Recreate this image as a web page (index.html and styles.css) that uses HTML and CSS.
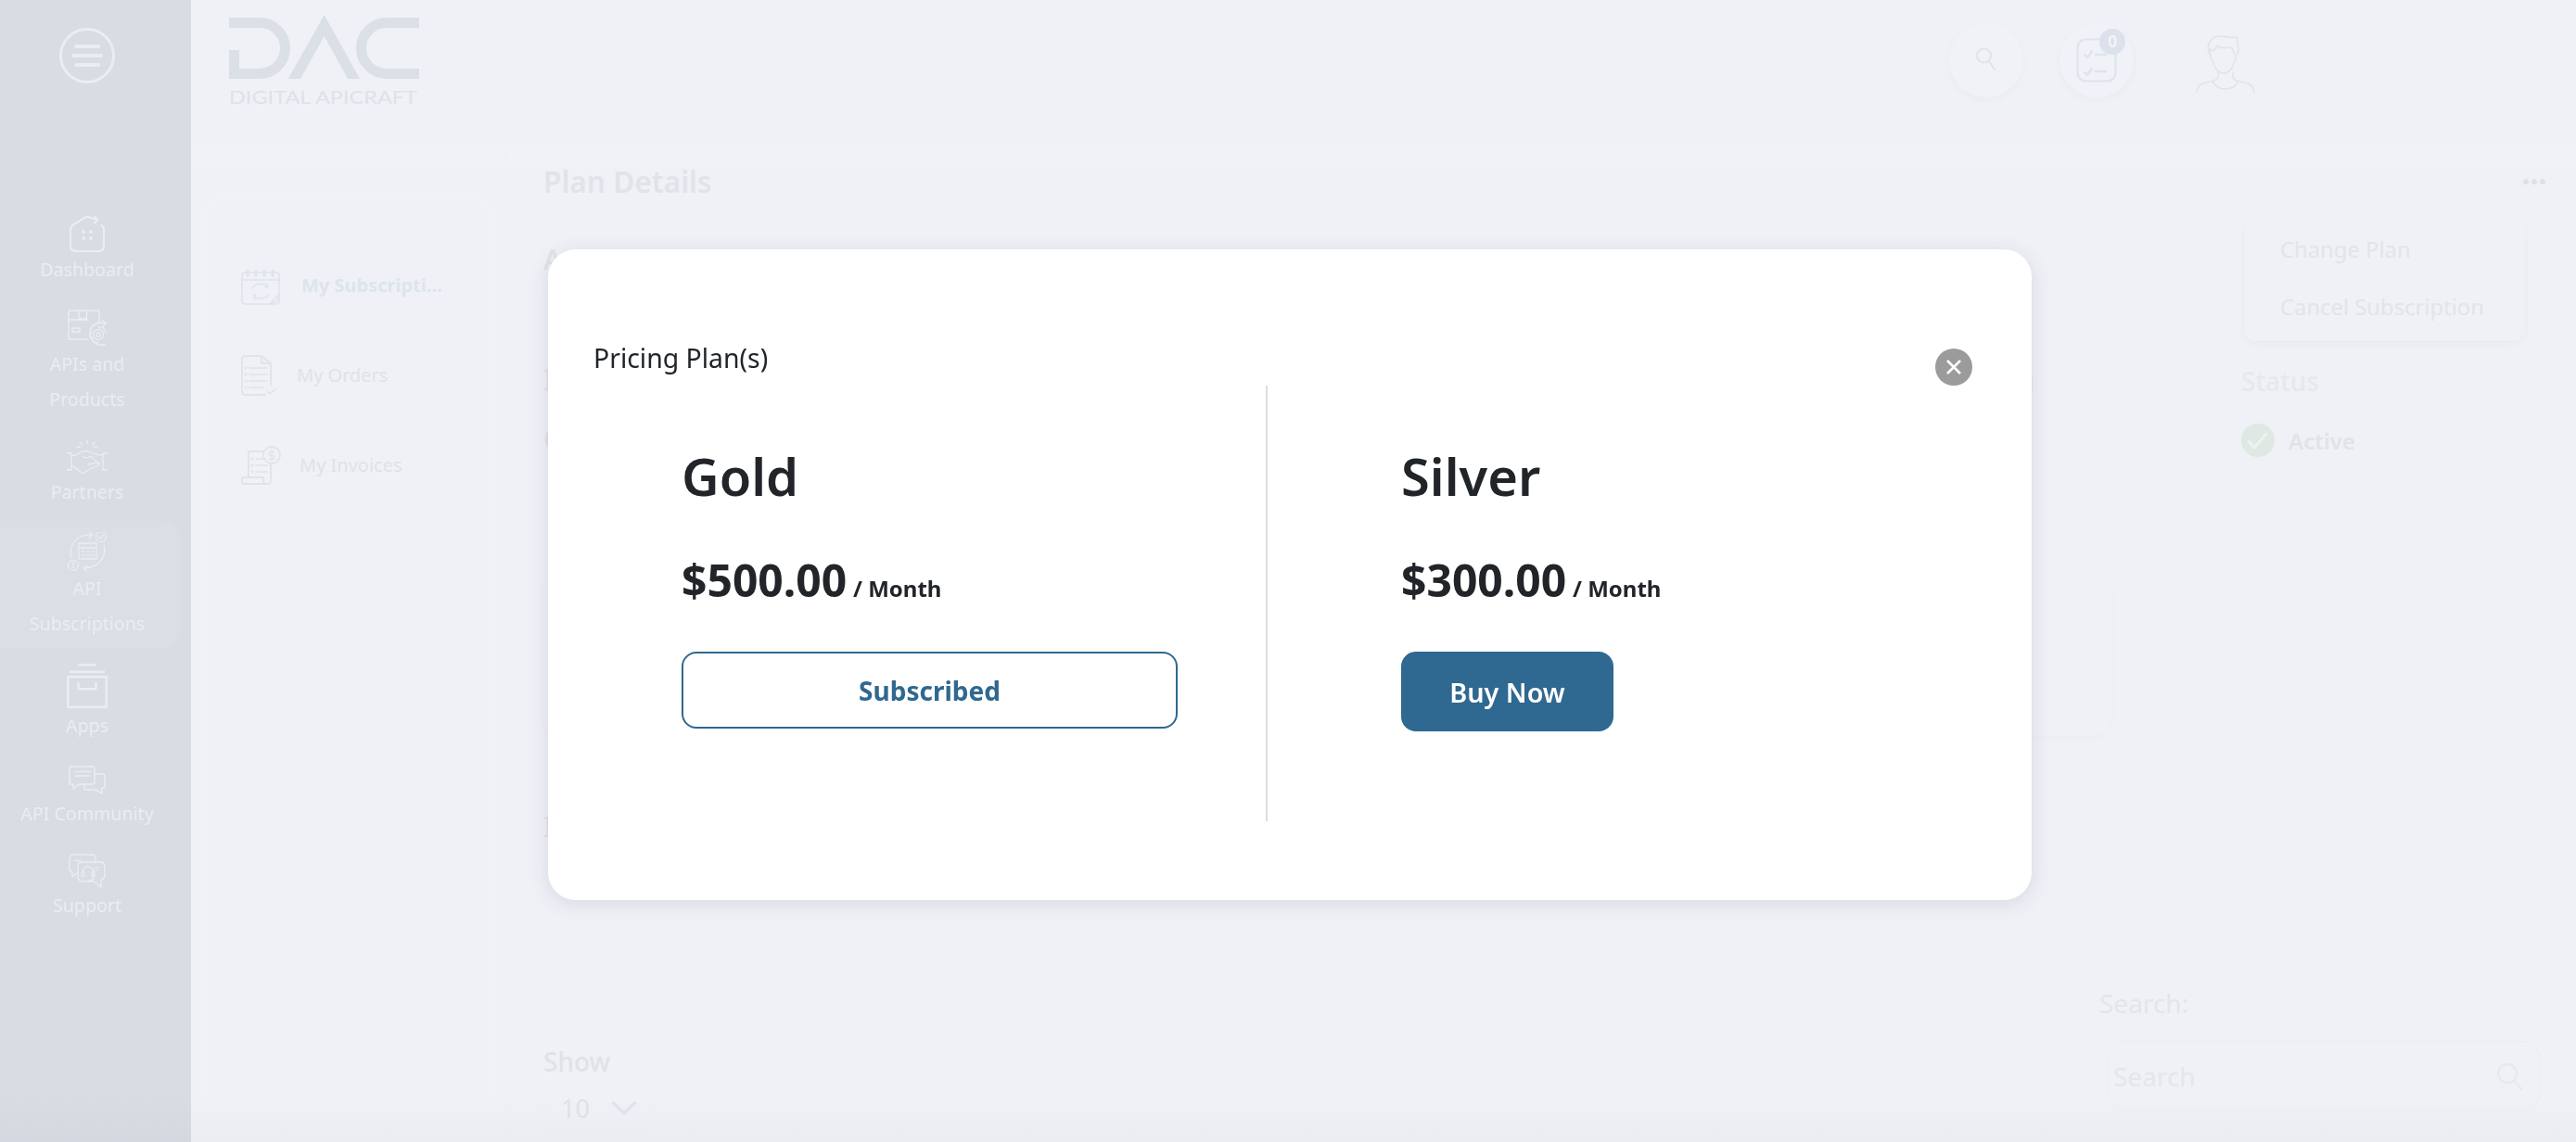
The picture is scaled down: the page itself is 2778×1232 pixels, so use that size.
FILE: index.html
```html
<!DOCTYPE html>
<html lang="en">
<head>
<meta charset="utf-8">
<title>Plan Details</title>
<link rel="stylesheet" href="styles.css">
</head>
<body>
<div class="app">
  <aside class="sidebar">
    <button class="menu-btn" aria-label="Menu">
      <svg width="60" height="60" viewBox="0 0 60 60"><circle cx="30" cy="30" r="28.500" class="ico" stroke-width="3"/><path d="M18 20h24M15 30h30M18 40h24" class="ico" stroke-width="4"/></svg>
    </button>
    <nav class="nav">
      <a class="nav-item">
        <svg width="38" height="39" viewBox="0 0 38 39"><path d="M30 4 22 1.600q-3-1.200-6 .4L3.500 10Q1 12 1 15v17q0 6 6 6h24q6 0 6-6V15q0-3-2.500-5" class="ico" stroke-width="2.200"/><path d="M27 .5 30.500 4 27 7.500" class="ico" stroke-width="2"/><circle cx="15" cy="17" r="1.900" class="dot"/><circle cx="23" cy="17" r="1.900" class="dot"/><circle cx="15" cy="24" r="1.900" class="dot"/><circle cx="23" cy="24" r="1.900" class="dot"/></svg>
        <span>Dashboard</span>
      </a>
      <a class="nav-item">
        <svg width="42" height="40" viewBox="0 0 42 40"><path d="M1 1h33v13M1 1v31h21M1 11h21M12 1v10l2.500-2 2 2 2-2 2 2V1M5 24h8v-4H5z" class="ico" stroke-width="1.400"/><circle cx="33" cy="27" r="5.500" class="ico" stroke-width="1.400"/><circle cx="33" cy="27" r="2" class="ico" stroke-width="1.400"/><path d="M41 15c-7-3-15 1-17 8-1 8 5 17 17 15" class="ico" stroke-width="1.400"/><path d="m38 12 3 3-3 3" class="ico" stroke-width="1.400"/><path d="m33 18 2 2 3-1 2 4 2 2M33 36l-3-1-3-1-1-4-2-3 2-3" class="ico" stroke-width="1.200"/></svg>
        <span>APIs and<br>Products</span>
      </a>
      <a class="nav-item">
        <svg width="44" height="38" viewBox="0 0 44 38"><path d="M22 0v5M14 3l3 3M30 3l-3 3M11 8h4M29 8h4" class="ico" stroke-width="1.300"/><path d="M0 15h5v18H0M44 15h-5v18h5" class="ico" stroke-width="1.300"/><path d="M5 17c4 1 5 0 8-2 4-3 9-3 13-1 4 2 7 3 13 3M5 29c3 0 4 1 6 3l5 4c2 1 4 0 5-2l13-6c2-1 1-4-2-3l-9 2M17 18c3 3 6 2 9 0l9 9" class="ico" stroke-width="1.300"/></svg>
        <span>Partners</span>
      </a>
      <a class="nav-item nav-item-active">
        <svg width="42" height="42" viewBox="0 0 42 42"><path d="M4 28C0 14 10 2 26 3M39 14c3 13-5 24-21 25" class="ico" stroke-width="1.300"/><path d="m23 0 4 3-4 3M21 36l-4 3 4 3" class="ico" stroke-width="1.300"/><circle cx="36" cy="5" r="5.500" class="ico" stroke-width="1.300"/><path d="m33.500 5 2 2 3-4" class="ico" stroke-width="1.200"/><circle cx="6" cy="36" r="5.500" class="ico" stroke-width="1.300"/><path d="M12 12h19v17H12zM12 17h19M16 21h2m3 0h2m3 0h2M16 25h2m3 0h2m3 0h2" class="ico" stroke-width="1.300"/><path d="M7.500 33.500H5.200v2.500h1.800v2.300H4.500M6 32.500v7" class="ico" stroke-width=".8"/></svg>
        <span>API<br>Subscriptions</span>
      </a>
      <a class="nav-item">
        <svg width="44" height="48" viewBox="0 0 44 48"><path d="M13 1.200h18M4 8.800h36M1.200 14.200h41.600v32.600H1.200zM12.500 21v6.200h19V21" class="ico" stroke-width="2.400"/></svg>
        <span>Apps</span>
      </a>
      <a class="nav-item">
        <svg width="40" height="33" viewBox="0 0 40 33"><path d="M3 1h23q2 0 2 2v15q0 2-2 2H11l-6 5v-5H3q-2 0-2-2V3q0-2 2-2z" class="ico" stroke-width="1.500"/><path d="M7 6.500h16M7 11h16" class="ico" stroke-width="1.500"/><path d="M28 9h9q2 0 2 2v11q0 2-2 2h-1v6l-7-4H19q-2 0-2-2v-4" class="ico" stroke-width="1.500"/></svg>
        <span>API Community</span>
      </a>
      <a class="nav-item">
        <svg width="40" height="37" viewBox="0 0 40 37"><path d="M29 9V5q0-4-4-4H6Q1 1 1 6v10q0 3 3 4v5l6-5" class="ico" stroke-width="1.400"/><path d="M15 9h19q5 0 5 5v9q0 4-4 5v8l-8-6H16q-6 0-6-6V14q0-5 5-5z" class="ico" stroke-width="1.400"/><path d="M7 7.500h6" class="ico" stroke-width="1.400" stroke-dasharray="1.500 1"/><path d="M15 20c0-8 11-8 12 0v6q0 3-6 3" class="ico" stroke-width="1.400"/><rect x="14" y="19" width="3" height="6" rx="1.500" class="ico" stroke-width="1.200"/><rect x="25" y="19" width="3" height="6" rx="1.500" class="ico" stroke-width="1.200"/><path d="M28 15h6M28 18h4" class="ico" stroke-width="1.200"/></svg>
        <span>Support</span>
      </a>
    </nav>
  </aside>

  <div class="main">
    <header class="topbar">
      <svg class="logo" width="206" height="100" viewBox="0 0 206 100" role="img" aria-label="DAC Digital APICraft">
        <path d="M6.500 38V63.500H34A27.500 27.500 0 0 0 34 8.500H1" class="logo-mark" stroke-width="11"/>
        <path d="M103.700 0 142 69h-13L103.700 23 78 69H64.700z" class="logo-fill"/>
        <path d="M206 8.500H171A27.500 27.500 0 0 0 171 63.500H206" class="logo-mark" stroke-width="11"/>
        <text x="1" y="95.500" textLength="203" lengthAdjust="spacingAndGlyphs" class="logo-text">DIGITAL APICRAFT</text>
      </svg>
      <div class="top-actions">
        <div class="circle-btn">
          <svg width="24" height="30" viewBox="0 0 24 30"><circle cx="9.500" cy="10" r="7.500" class="line" stroke-width="2"/><path d="m15 16 6 9" class="line" stroke-width="2"/></svg>
        </div>
        <div class="circle-btn circle-btn-last">
          <svg width="44" height="48" viewBox="0 0 44 48"><rect x="1.500" y="1.500" width="41" height="45" rx="9" class="line-blue" stroke-width="2.200"/><path d="m9 18 3 3 5-7M9 37l3 3 5-7M21 18h11M21 36h11" class="line-blue" stroke-width="2.400"/></svg>
          <span class="badge">0</span>
        </div>
        <div class="avatar">
          <svg width="64" height="62" viewBox="0 0 64 62"><path d="M15 21c-2-5-2-9-1-12 2-5 7-8 13-8 5 0 9 2 14 1l4 1v6c1 3 1 8 0 12" class="line" stroke-width="1.600"/><path d="M15 14c2 2 4 4 6 1l2-4c2 3 7 3 12 2l4 1 4 9c1 3 0 5-2 6-1 7-6 12-11 12s-10-5-11-12c-2-1-3-3-3-6z" class="line" stroke-width="1.600"/><path d="M24 40v5c0 2-2 3-4 4L8 52c-5 2-7 5-7 10M40 40v5c0 2 2 3 4 4l12 3c5 2 7 5 7 10M18 50c3 5 8 8 14 8s11-3 14-8" class="line" stroke-width="1.600"/></svg>
        </div>
      </div>
    </header>

    <div class="workspace">
      <aside class="subnav">
        <div class="subnav-card">
          <a class="sub-item sub-item-active">
            <svg width="42" height="38" viewBox="0 0 42 38"><rect x="1" y="3" width="40" height="34" rx="3" class="line-blue" stroke-width="1.500"/><path d="M1 11h40" class="line-blue" stroke-width="1.500"/><path d="M7 0v6M16 0v6M25 0v6M34 0v6" class="line-blue" stroke-width="3"/><path d="M12 20c3-6 13-6 17-2M30 27c-4 5-13 5-17 1M27 15l2 3-3 1M15 32l-2-4 3-1" class="line-blue" stroke-width="1.400"/><path d="M31 37l10-11c0 6-3 10-10 11z" class="line-blue" stroke-width="1.400"/></svg>
            <span class="sub-label">My Subscriptions</span>
          </a>
          <a class="sub-item sub-item-orders">
            <svg width="38" height="44" viewBox="0 0 38 44"><path d="M22 1H5Q1 1 1 5v34q0 4 4 4h21l-2-1M22 1l10 8v23M22 1v6q0 2 2 2h8" class="line" stroke-width="1.800"/><path d="M9 14h19M9 21h19M9 28h19M9 35h15" class="line" stroke-width="1.600"/><circle cx="5" cy="14" r="1.500" class="dot-line"/><circle cx="5" cy="21" r="1.500" class="dot-line"/><circle cx="5" cy="28" r="1.500" class="dot-line"/><circle cx="5" cy="35" r="1.500" class="dot-line"/><path d="m28 39 3 3 6-5" class="line" stroke-width="1.600"/></svg>
            <span>My Orders</span>
          </a>
          <a class="sub-item sub-item-invoices">
            <svg width="43" height="42" viewBox="0 0 43 42"><circle cx="33" cy="10" r="9" class="line" stroke-width="1.800"/><path d="M36 6.500h-4q-2 0-2 2t2 2h2q2 0 2 2t-2 2h-4M33 4v12" class="line" stroke-width="1.300"/><path d="M24 6H10Q8 6 8 8v26M32 20v18q0 3-3 3H4q-3 0-3-3v-2q0-2 2-2h21v4q0 3 3 3" class="line" stroke-width="1.800"/><path d="M16 14h8M16 21h12M16 28h12" class="line" stroke-width="1.500"/><circle cx="12" cy="14" r="1.400" class="dot-line"/><circle cx="12" cy="21" r="1.400" class="dot-line"/><circle cx="12" cy="28" r="1.400" class="dot-line"/></svg>
            <span>My Invoices</span>
          </a>
        </div>
      </aside>

      <section class="content">
        <div class="title-row">
          <h1 class="page-title">Plan Details</h1>
          <div class="more-wrap">
            <span class="more-dots"><i></i><i></i><i></i></span>
            <ul class="dropdown">
              <li>Change Plan</li>
              <li>Cancel Subscription</li>
            </ul>
          </div>
        </div>

        <div class="plan-head"><span class="faint-label">A</span></div>

        <div class="plan-row">
          <div class="plan-cells">
            <div class="plan-cell-labels">
              <span class="faint-label">I</span>
              <span class="faint-label">n</span>
            </div>
            <span class="faint-label">C</span>
          </div>
          <div class="status-cell">
            <div class="status-title">Status</div>
            <div class="status-value">
              <svg width="36" height="36" viewBox="0 0 36 36"><circle cx="18" cy="18" r="18" class="status-disc"/><path d="m8 19 6 7 13-15" class="status-tick" stroke-width="3"/></svg>
              <span>Active</span>
            </div>
          </div>
        </div>

        <div class="usage-card"></div>

        <div class="history-head"><span class="faint-label">I</span></div>

        <div class="table-controls">
          <div class="show-block">
            <div class="show-label">Show</div>
            <div class="show-select">
              <span>10</span>
              <svg width="28" height="17" viewBox="0 0 28 17"><path d="M1.500 2 14 14 26.500 2" class="chev" stroke-width="3.400"/></svg>
            </div>
          </div>
          <div class="search-block">
            <div class="search-label">Search:</div>
            <div class="search-input">
              <span>Search</span>
              <svg width="30" height="30" viewBox="0 0 30 30"><circle cx="12" cy="12" r="10" class="soft" stroke-width="2.200"/><path d="m19 20 9 10" class="soft" stroke-width="2.200"/></svg>
            </div>
          </div>
        </div>
      </section>
    </div>
  </div>
</div>

<div class="backdrop">
  <div class="modal">
    <button class="close-btn" aria-label="Close">
      <svg width="18" height="18" viewBox="0 0 18 18"><path d="M2 2l14 14M16 2 2 16" class="close-x" stroke-width="2.600"/></svg>
    </button>
    <div class="modal-title">Pricing Plan(s)</div>
    <div class="plans">
      <div class="plan plan-first">
        <div class="plan-name">Gold</div>
        <div class="plan-price"><strong>$500.00</strong> <span>/ Month</span></div>
        <button class="btn btn-outline">Subscribed</button>
      </div>
      <div class="plan">
        <div class="plan-name">Silver</div>
        <div class="plan-price"><strong>$300.00</strong> <span>/ Month</span></div>
        <button class="btn btn-solid">Buy Now</button>
      </div>
    </div>
  </div>
</div>
</body>
</html>
```

FILE: styles.css
```css
* { box-sizing: border-box; }
html, body { margin: 0; padding: 0; height: 100%; }
body {
  width: 2778px;
  height: 1232px;
  overflow: hidden;
  background: #eff1f6;
  font-family: "Noto Sans", "Open Sans", sans-serif;
  color: #e1e3e8;
}
svg { display: block; fill: none; flex: none; }
ul { list-style: none; margin: 0; padding: 0; }
h1 { margin: 0; }
button { font-family: inherit; border: 0; padding: 0; background: none; }

.ico { stroke: #eaedf2; fill: none; stroke-linecap: round; stroke-linejoin: round; }
.dot { fill: #eaedf2; }
.line { stroke: #e0e3e8; fill: none; stroke-linecap: round; stroke-linejoin: round; }
.dot-line { fill: #e0e3e8; }
.line-blue { stroke: #dee4ec; fill: none; stroke-linecap: round; stroke-linejoin: round; }

.app { display: flex; height: 1232px; }

/* Sidebar */
.sidebar {
  width: 206px;
  flex: none;
  background: #d8dce3;
  padding: 30px 18px 0 0;
  display: flex;
  flex-direction: column;
}
.menu-btn { align-self: center; width: 60px; height: 60px; }
.nav { margin-top: 131px; display: flex; flex-direction: column; }
.nav-item {
  display: flex;
  flex-direction: column;
  align-items: center;
  padding: 12px 0;
  color: #eaedf2;
  font-size: 19.600px;
  line-height: 38px;
  text-align: center;
}
.nav-item-active {
  margin-right: -6px;
  padding: 12px 6px 8px 0;
  margin-bottom: 4px;
  border-radius: 0 18px 18px 0;
  background: #dadee5;
}

/* Top bar */
.main { flex: 1; min-width: 0; display: flex; flex-direction: column; }
.topbar {
  height: 163px;
  flex: none;
  display: flex;
  justify-content: space-between;
  padding: 16px 336px 0 40px;
}
.logo-mark { stroke: #dbe0e6; fill: none; }
.logo-fill { fill: #dbe0e6; }
.logo-text { fill: #dde2e8; font-family: "Lato", "Liberation Sans", sans-serif; font-size: 19px; font-weight: 400; }
.top-actions { display: flex; padding-top: 9px; }
.circle-btn {
  position: relative;
  width: 80px;
  height: 80px;
  margin-right: 39px;
  border-radius: 50%;
  background: #f0f2f7;
  box-shadow: 0 3px 8px rgba(60, 70, 90, .03);
  display: flex;
  align-items: center;
  justify-content: center;
}
.circle-btn-last { margin-right: 57px; }
.badge {
  position: absolute;
  left: 43px;
  top: 6px;
  width: 28px;
  height: 28px;
  border-radius: 50%;
  background: #dbe2ec;
  color: #f3f5f8;
  font-size: 17px;
  font-weight: 600;
  line-height: 28px;
  text-align: center;
}
.avatar {
  width: 84px;
  height: 84px;
  border-radius: 50%;
  background: #eff1f6;
  display: flex;
  align-items: flex-end;
  justify-content: center;
  padding-bottom: 9px;
}

/* Workspace */
.workspace {
  flex: 1;
  min-height: 0;
  display: flex;
  background: linear-gradient(#f0f2f6 0, #f0f2f6 14px, #eff1f6 18px);
}
.subnav {
  width: 340px;
  flex: none;
  padding: 50px 15px 0;
  border-right: 1px solid #edeff4;
}
.subnav-card {
  height: 1040px;
  padding: 77px 0 0 38px;
  border-radius: 20px 20px 0 0;
  border: 1px solid #f0f2f6;
  border-bottom: 0;
  display: flex;
  flex-direction: column;
  gap: 54px;
}
.sub-item {
  display: flex;
  align-items: center;
  font-size: 20px;
  line-height: 30px;
  color: #e0e2e7;
}
.sub-item-active { gap: 23px; font-weight: 700; color: #dde5ec; }
.sub-item-orders { gap: 22px; }
.sub-item-invoices { gap: 20px; }
.sub-label {
  width: 152px;
  padding-bottom: 4px;
  white-space: nowrap;
  overflow: hidden;
  text-overflow: ellipsis;
}

/* Content */
.content {
  flex: 1;
  min-width: 0;
  padding: 14px 30px 0 40px;
  display: flex;
  flex-direction: column;
}
.title-row { height: 38px; flex: none; display: flex; justify-content: space-between; align-items: center; }
.page-title { font-size: 31.600px; line-height: 38px; font-weight: 600; color: #e1e3e8; }
.more-wrap { position: relative; padding-right: 3px; }
.more-dots { display: flex; gap: 3px; }
.more-dots i { width: 6px; height: 6px; border-radius: 50%; background: #dde0e5; }
.dropdown {
  position: absolute;
  top: 44px;
  right: 25px;
  width: 303px;
  height: 131px;
  padding: 1px 0 0 39px;
  border-radius: 14px;
  background: #eff1f6;
  box-shadow: 0 3px 8px rgba(60, 70, 90, .035);
  font-size: 23.800px;
  line-height: 62px;
  color: #e2e4e9;
  white-space: nowrap;
}
.faint-label { font-size: 30px; line-height: 40px; font-weight: 500; color: #e1e3e8; }
.plan-head { height: 127px; flex: none; padding-top: 45px; border-bottom: 1px solid #edeff4; }
.plan-row {
  height: 201px;
  flex: none;
  padding-top: 40px;
  border-bottom: 1px solid #edeff4;
  display: flex;
}
.plan-cells { flex: 1; display: flex; flex-direction: column; gap: 24px; padding: 8px 189px 0 0; }
.plan-cell-labels { display: flex; justify-content: space-between; }
.status-cell {
  width: 365px;
  flex: none;
  height: 119px;
  padding-left: 33px;
  border-left: 1px solid #edeff4;
}
.status-title { font-size: 28px; line-height: 40px; padding-top: 9px; color: #e6e8ed; font-weight: 500; }
.status-value {
  margin-top: 26px;
  display: flex;
  align-items: center;
  gap: 15px;
  font-size: 24px;
  font-weight: 600;
  color: #e1e3e8;
}
.status-disc { fill: #dfe8e3; }
.status-tick { stroke: #eff2f2; fill: none; stroke-linecap: round; stroke-linejoin: round; }
.usage-card {
  width: 1691px;
  height: 175px;
  flex: none;
  margin-top: 76px;
  border-radius: 20px;
  background: #eff1f6;
  box-shadow: 0 2px 10px rgba(60, 70, 90, .02);
}
.history-head { height: 203px; flex: none; padding-top: 78px; border-bottom: 1px solid #edeff4; }
.table-controls { display: flex; justify-content: space-between; align-items: flex-start; padding-right: 8px; }
.show-block { padding-top: 128px; }
.show-label { font-size: 28px; line-height: 40px; font-weight: 500; color: #e0e2e6; }
.show-select {
  width: 114px;
  height: 61px;
  border: 1px solid #edeff4;
  border-radius: 12px;
  padding-left: 18px;
  display: flex;
  align-items: center;
  gap: 23px;
  font-size: 27px;
  color: #e0e2e6;
}
.chev { stroke: #dde5ee; fill: none; }
.search-block { width: 476px; padding-top: 65px; }
.search-label { font-size: 28px; line-height: 40px; color: #e3e5ea; }
.search-input {
  margin: 21px 0 0 8px;
  width: 468px;
  height: 75px;
  border: 1px solid #ebedf2;
  border-radius: 20px;
  padding: 0 17px 0 6px;
  display: flex;
  align-items: center;
  justify-content: space-between;
  font-size: 28px;
  color: #e4e6eb;
}
.soft { stroke: #e6e8ec; fill: none; }

/* Modal */
.backdrop {
  position: fixed;
  inset: 0;
  display: flex;
  align-items: center;
  justify-content: center;
  padding: 8px 0 0 4px;
  background: linear-gradient(rgba(40, 50, 70, 0) 96%, rgba(40, 50, 70, .02));
}
.modal {
  position: relative;
  width: 1600px;
  height: 702px;
  border-radius: 30px;
  background: #fff;
  padding: 99px 0 0;
  box-shadow: 0 4px 22px rgba(40, 50, 90, .12);
  color: #212529;
}
.modal-title { padding-left: 49px; font-size: 28.400px; line-height: 36px; }
.close-btn {
  position: absolute;
  top: 107px;
  right: 64px;
  width: 40px;
  height: 40px;
  border-radius: 50%;
  background: #9b9b9b;
  display: flex;
  align-items: center;
  justify-content: center;
}
.close-x { stroke: #fff; fill: none; }
.plans { margin-top: 12px; height: 470px; display: flex; }
.plan { flex: 1; padding: 59px 0 0 144px; }
.plan-first { flex: none; width: 776px; padding-left: 144px; border-right: 2px solid #dedede; }
.plan-name { font-size: 56px; line-height: 76px; font-weight: 600; }
.plan-price { margin-top: 45px; height: 60px; line-height: 60px; font-size: 26px; font-weight: 700; white-space: nowrap; }
.plan-price strong { font-size: 48px; font-weight: 700; }
.plan-price span { font-size: 24px; font-weight: 700; }
.btn { display: block; margin-top: 47px; font-size: 28px; font-weight: 700; border-radius: 16px; }
.btn-outline { width: 535px; height: 83px; border: 2px solid #2f6890; color: #2f6890; background: #fff; }
.btn-solid { width: 229px; height: 86px; background: #2f6890; color: #fff; font-size: 28.800px; font-weight: 600; }
```
